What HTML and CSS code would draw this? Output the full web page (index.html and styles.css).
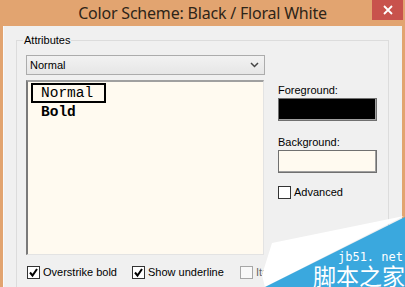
FILE: index.html
```html
<!DOCTYPE html>
<html>
<head>
<meta charset="utf-8">
<link rel="stylesheet" href="styles.css">
</head>
<body>
<div class="window">
  <div class="titlebar">
    <span class="title">Color Scheme: Black / Floral White</span>
    <span class="close"><svg width="10" height="10" viewBox="0 0 10 10"><path d="M1 1L9 9M9 1L1 9" stroke="#fff" stroke-width="1.8"/></svg></span>
  </div>
  <div class="client">
    <div class="group">
      <div class="group-label">Attributes</div>
      <div class="group-body">
        <div class="left">
          <div class="select">
            <span>Normal</span>
            <svg width="9" height="6" viewBox="0 0 9 6"><path d="M1 1L4.5 4.5L8 1" fill="none" stroke="#444" stroke-width="1.5"/></svg>
          </div>
          <div class="listbox">
            <div class="item item-normal">Normal</div>
            <div class="item item-bold">Bold</div>
          </div>
        </div>
        <div class="right">
          <div class="lbl lbl-first">Foreground:</div>
          <div class="swatch swatch-fg"></div>
          <div class="lbl">Background:</div>
          <div class="swatch swatch-bg"></div>
          <div class="check check-adv"><span class="box"></span><span>Advanced</span></div>
        </div>
      </div>
      <div class="bottom">
        <div class="check check-w1"><span class="box"><svg width="11" height="11" viewBox="0 0 11 11"><path d="M2 5.5L4.5 8.5L9 2" fill="none" stroke="#000" stroke-width="2"/></svg></span><span>Overstrike bold</span></div>
        <div class="check check-w2"><span class="box"><svg width="11" height="11" viewBox="0 0 11 11"><path d="M2 5.5L4.5 8.5L9 2" fill="none" stroke="#000" stroke-width="2"/></svg></span><span>Show underline</span></div>
        <div class="check check-faded"><span class="box"></span><span>Italic</span></div>
      </div>
    </div>
  </div>
  <div class="watermark">
    <div class="wm-white"></div>
    <div class="wm-blue"></div>
    <div class="wm-text">
      <span class="wm-url">jb51. net</span>
      <span class="wm-cn">脚本之家</span>
    </div>
  </div>
</div>
</body>
</html>
```

FILE: styles.css
```css
html, body {
  margin: 0;
  padding: 0;
}
body {
  width: 405px;
  height: 287px;
  overflow: hidden;
  font-family: "Liberation Sans", Arial, sans-serif;
  font-size: 11px;
  color: #000;
}
.window {
  position: relative;
  width: 405px;
  height: 287px;
  background: #e2a470;
  display: flex;
  flex-direction: column;
  overflow: hidden;
}
.titlebar {
  height: 26px;
  flex: none;
  display: flex;
  align-items: center;
  justify-content: center;
}
.title {
  font-family: "Noto Sans", sans-serif;
  font-size: 16px;
  color: #2e2418;
  line-height: 26px;
  letter-spacing: -0.2px;
}
.close {
  position: absolute;
  top: 0;
  right: 2px;
  width: 31px;
  height: 20px;
  background: #c8524c;
  display: flex;
  align-items: center;
  justify-content: center;
}
.client {
  flex: 1;
  margin: 0 3px;
  background: #f0f0f0;
  border-left: 1px solid #fafafa;
  padding: 14px 13px 0 12px;
  min-height: 0;
}
.group {
  border: 1px solid #dcdcdc;
  border-bottom: none;
  height: 260px;
  padding-left: 9px;
}
.group-label {
  width: fit-content;
  margin-top: -8px;
  margin-left: -3px;
  padding: 0 1px;
  line-height: 15px;
  background: #f0f0f0;
}
.group-body {
  display: flex;
  gap: 13px;
  margin-top: 7px;
}
.left {
  width: 239px;
}
.select {
  box-sizing: border-box;
  height: 20px;
  border: 1px solid #acacac;
  background: linear-gradient(#f2f2f2, #e6e6e6);
  display: flex;
  align-items: center;
  justify-content: space-between;
  padding: 0 5px 0 3px;
}
.listbox {
  box-sizing: border-box;
  margin-top: 5px;
  width: 238px;
  height: 175px;
  background: #fffaf0;
  border-top: 2px solid #a0a0a0;
  border-left: 2px solid #7a7a7a;
  border-right: 1px solid #e3e3e3;
  border-bottom: 1px solid #e3e3e3;
  font-family: "Liberation Mono", "DejaVu Sans Mono", monospace;
  font-size: 14.5px;
}
.item {
  line-height: 16px;
}
.item-normal {
  box-sizing: border-box;
  width: 75px;
  height: 20px;
  margin: 1px 0 0 3px;
  border: 2px solid #000;
  padding-left: 8px;
}
.item-bold {
  font-weight: bold;
  margin: 1px 0 0 13px;
}
.right {
  width: 99px;
  display: flex;
  flex-direction: column;
}
.lbl {
  line-height: 16px;
  margin-top: 13px;
}
.lbl-first {
  margin-top: 27px;
}
.swatch {
  box-sizing: border-box;
  height: 23px;
  border: 1px solid #707070;
  box-shadow: inset -1px -1px 0 #a0a0a0;
}
.swatch-fg {
  background: #000;
}
.swatch-bg {
  background: #fffaf0;
}
.check {
  display: flex;
  align-items: center;
  gap: 3px;
  line-height: 15px;
}
.check-adv {
  margin-top: 12px;
}
.box {
  box-sizing: border-box;
  width: 13px;
  height: 13px;
  border: 1px solid #333;
  background: #fff;
  display: flex;
  align-items: center;
  justify-content: center;
  flex: none;
}
.bottom {
  display: flex;
  margin-top: 10px;
  padding-left: 1px;
}
.check-w1 {
  width: 105px;
}
.check-w2 {
  width: 108px;
}
.check-faded {
  opacity: 0.6;
}
.check-faded .box {
  border-color: #777;
}
.watermark {
  position: absolute;
  right: 0;
  bottom: 0;
  width: 145px;
  height: 72px;
}
.wm-white,
.wm-blue {
  position: absolute;
  inset: 0;
}
.wm-white {
  background: #ffffff;
  clip-path: polygon(12px 28px, 144px 1px, 5px 72px, 2px 60px);
}
.wm-blue {
  background: #3aa8de;
  clip-path: polygon(145px 2px, 5px 72px, 145px 72px);
}
.wm-text {
  position: absolute;
  right: 0;
  bottom: 0;
  display: flex;
  flex-direction: column;
  align-items: flex-end;
  color: #fff;
}
.wm-url {
  font-family: "DejaVu Sans Mono", "Liberation Mono", monospace;
  font-size: 12px;
  line-height: 12px;
  margin-right: 2px;
}
.wm-cn {
  font-family: "Noto Sans CJK SC", sans-serif;
  font-size: 23px;
  line-height: 24px;
}
```
